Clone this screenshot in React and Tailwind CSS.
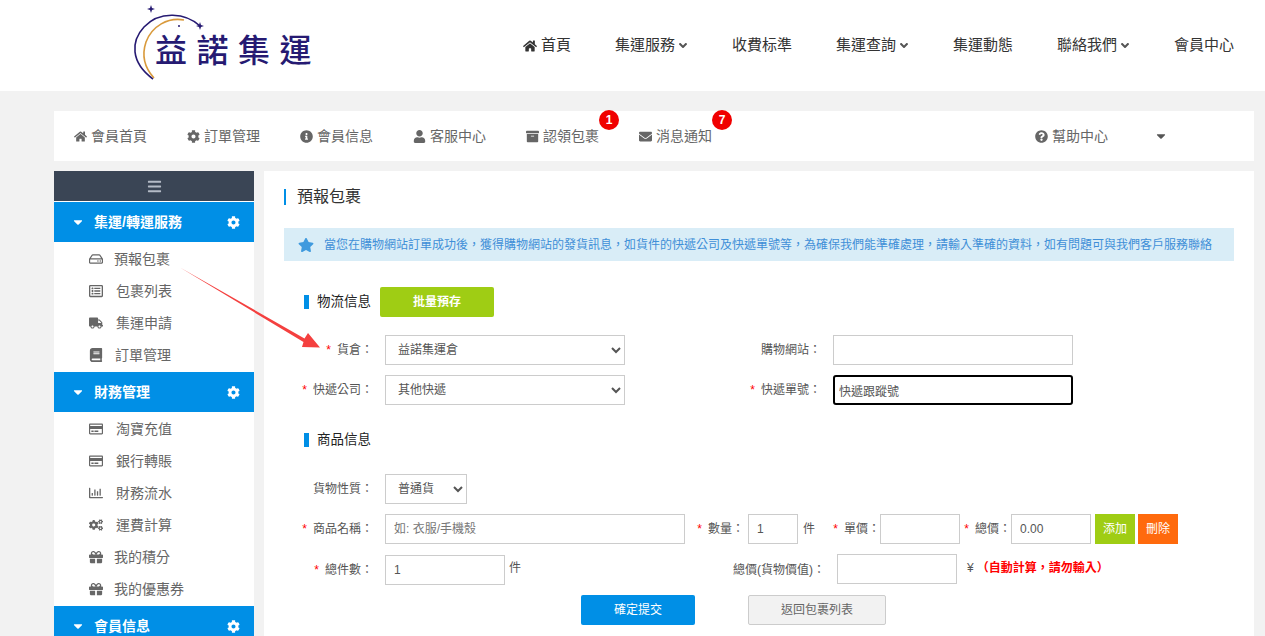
import {
  FaHome, FaCog, FaInfoCircle, FaUser, FaArchive, FaEnvelope, FaQuestionCircle, FaCaretDown,
  FaAngleDown, FaBars, FaStar, FaRegHdd, FaRegListAlt, FaTruck, FaBook, FaRegCreditCard,
  FaRegChartBar, FaCogs, FaGift,
} from 'react-icons/fa'

const FONT = 'font-["Liberation_Sans","Noto_Sans_CJK_TC",sans-serif]'

const topNav = [
  { label: '首頁', icon: true },
  { label: '集運服務', arrow: true },
  { label: '收費标準' },
  { label: '集運查詢', arrow: true },
  { label: '集運動態' },
  { label: '聯絡我們', arrow: true },
  { label: '會員中心' },
]

const memberNav = [
  { label: '會員首頁', Icon: FaHome },
  { label: '訂單管理', Icon: FaCog },
  { label: '會員信息', Icon: FaInfoCircle },
  { label: '客服中心', Icon: FaUser },
  { label: '認領包裹', Icon: FaArchive, badge: 1 },
  { label: '消息通知', Icon: FaEnvelope, badge: 7 },
]

const menu = [
  {
    title: '集運/轉運服務',
    items: [
      { label: '預報包裹', Icon: FaRegHdd, gap: 'ml-[11px]' },
      { label: '包裹列表', Icon: FaRegListAlt, gap: 'ml-[13px]' },
      { label: '集運申請', Icon: FaTruck, gap: 'ml-[13px]' },
      { label: '訂單管理', Icon: FaBook, gap: 'ml-[12px]' },
    ],
  },
  {
    title: '財務管理',
    items: [
      { label: '淘寶充值', Icon: FaRegCreditCard, gap: 'ml-[13px]' },
      { label: '銀行轉賬', Icon: FaRegCreditCard, gap: 'ml-[13px]' },
      { label: '財務流水', Icon: FaRegChartBar, gap: 'ml-[13px]' },
      { label: '運費計算', Icon: FaCogs, gap: 'ml-[13px]' },
      { label: '我的積分', Icon: FaGift, gap: 'ml-[11px]' },
      { label: '我的優惠券', Icon: FaGift, gap: 'ml-[11px]' },
    ],
  },
  { title: '會員信息', items: [] },
]

function Logo() {
  return (
    <div className="relative w-[190px] h-[91px] ml-[130px] pl-[25px] pt-[29px] shrink-0">
      <svg className="absolute left-0 top-0" width="190" height="91" viewBox="130 0 190 91">
        <path d="M200 26C186 13 160 10 144 27C131 41 130 62 153 79" fill="none" stroke="#261a72" strokeWidth="1.6" />
        <path d="M184 20C168 17 152 26 146 42C142 54 143 66 154 78" fill="none" stroke="#d99a3c" strokeWidth="1.6" />
        <path d="M151 5L152 8L155 9L152 10L151 13L150 10L147 9L150 8Z" fill="#261a72" />
        <path d="M200 22L201 25L204 26L201 27L200 30L199 27L196 26L199 25Z" fill="#261a72" />
        <circle cx="179" cy="26" r="1" fill="#261a72" />
      </svg>
      <div className="relative text-[32px] leading-[44px] tracking-[9.5px] font-medium whitespace-nowrap text-[#261a72]">
        益諾集運
      </div>
    </div>
  )
}

function Header() {
  return (
    <header className="h-[91px] bg-white flex items-center justify-between pr-[31px]">
      <Logo />
      <nav className="flex items-center gap-[44px] text-[15px] text-[#333]">
        {topNav.map((item) => (
          <a key={item.label} className="flex items-center whitespace-nowrap">
            {item.icon && <FaHome className="text-[14px] mr-[4px]" />}
            {item.label}
            {item.arrow && <FaAngleDown className="text-[13px] text-[#555] ml-[3px] w-[10px]" />}
          </a>
        ))}
      </nav>
    </header>
  )
}

function MemberBar() {
  return (
    <div className="h-[50px] bg-white flex items-center pl-[20px] text-[14px] text-[#666]">
      <div className="flex items-center gap-[40px]">
        {memberNav.map(({ label, Icon, badge }) => (
          <a key={label} className="relative flex items-center whitespace-nowrap gap-[4px]">
            <Icon className="text-[13px] text-[#666]" />
            {label}
            {badge && (
              <span className="absolute left-full top-[-16px] w-[20px] h-[20px] rounded-full bg-[#f00000] text-white text-[12px] font-bold flex items-center justify-center">
                {badge}
              </span>
            )}
          </a>
        ))}
      </div>
      <a className="ml-auto flex items-center gap-[4px] whitespace-nowrap">
        <FaQuestionCircle className="text-[13px]" />
        幫助中心
      </a>
      <FaCaretDown className="text-[14px] ml-[46px] mr-[86px] text-[#555]" />
    </div>
  )
}

function Sidebar() {
  return (
    <aside className="w-[200px] shrink-0 bg-white">
      <div className="h-[30px] bg-[#3a4555] flex items-center justify-center mb-px">
        <FaBars className="text-[15px] text-[#b4bbc6]" />
      </div>
      {menu.map((group) => (
        <div key={group.title}>
          <div className="h-[40px] bg-[#008fe6] flex items-center text-white font-bold text-[14px] pl-[18px] pr-[14px]">
            <FaCaretDown className="text-[14px] w-[12px]" />
            <span className="ml-[10px]">{group.title}</span>
            <FaCog className="ml-auto text-[13px]" />
          </div>
          {group.items.length > 0 && (
            <ul className="py-px">
              {group.items.map(({ label, Icon, gap }) => (
                <li key={label} className="h-[32px] flex items-center pl-[35px] text-[14px] text-[#666]">
                  <Icon className="text-[14px] w-[14px] shrink-0" />
                  <span className={gap}>{label}</span>
                </li>
              ))}
            </ul>
          )}
        </div>
      ))}
    </aside>
  )
}

function Star() {
  return <span className="text-[#f00] mr-[6px]">*</span>
}

function FieldLabel({ text, required, className = 'w-[101px] pr-[12px]' }) {
  return (
    <label className={`${className} shrink-0 text-right whitespace-nowrap text-[12px] text-[#555]`}>
      {required && <Star />}
      {text}：
    </label>
  )
}

const inputClass =
  'h-[30px] border border-[#ccc] bg-white px-[8px] text-[12px] text-[#555] outline-none placeholder:text-[#777]'

function SectionTitle({ children }) {
  return (
    <div className="flex items-center pl-[20px] text-[13.5px] text-[#222]">
      <span className="w-[5px] h-[14px] bg-[#008fe6] mr-[8px]" />
      {children}
    </div>
  )
}

function PackageForm() {
  return (
    <main className="flex-1 bg-white px-[20px] pt-[18px]">
      <h1 className="h-[16px] flex items-center border-l-2 border-[#008fe6] pl-[11px] text-[16px] font-normal text-[#333]">
        預報包裹
      </h1>

      <div className="mt-[23px] h-[33px] bg-[#d9edf7] flex items-center pl-[14px] text-[12px] text-[#3f8fd8] whitespace-nowrap">
        <FaStar className="text-[16px] text-[#3f9ade] mr-[10px] shrink-0" />
        當您在購物網站訂單成功後，獲得購物網站的發貨訊息，如貨件的快遞公司及快遞單號等，為確保我們能準確處理，請輸入準確的資料，如有問題可與我們客戶服務聯絡
      </div>

      <div className="mt-[26px] flex items-center">
        <SectionTitle>物流信息</SectionTitle>
        <button className="ml-[9px] w-[114px] h-[30px] rounded-[2px] bg-[#9fcd14] text-white text-[12px] font-bold">
          批量預存
        </button>
      </div>

      <div className="mt-[18px] flex items-center">
        <FieldLabel text="貨倉" required />
        <select className={`${inputClass} w-[240px]`} defaultValue="益諾集運倉">
          <option>益諾集運倉</option>
        </select>
        <FieldLabel text="購物網站" className="w-[208px] pr-[12px]" />
        <input className={`${inputClass} w-[240px]`} />
      </div>
      <div className="mt-[10px] flex items-center">
        <FieldLabel text="快遞公司" required />
        <select className={`${inputClass} w-[240px]`} defaultValue="其他快遞">
          <option>其他快遞</option>
        </select>
        <FieldLabel text="快遞單號" required className="w-[208px] pr-[12px]" />
        <input
          className="h-[30px] w-[240px] border-2 border-black rounded-[3px] bg-white px-[4px] text-[12px] text-[#555] outline-none"
          defaultValue="快遞跟蹤號"
        />
      </div>

      <div className="mt-[25px] h-[20px] flex items-center">
        <SectionTitle>商品信息</SectionTitle>
      </div>

      <div className="mt-[24px] flex items-center">
        <FieldLabel text="貨物性質" />
        <select className={`${inputClass} w-[82px]`} defaultValue="普通貨">
          <option>普通貨</option>
        </select>
      </div>

      <div className="mt-[10px] flex items-center">
        <FieldLabel text="商品名稱" required />
        <input className={`${inputClass} w-[300px]`} placeholder="如: 衣服/手機殼" />
        <FieldLabel text="數量" required className="w-[63px] pr-[4px]" />
        <input className={`${inputClass} w-[50px]`} defaultValue="1" />
        <span className="ml-[5px] w-[12px] text-[12px] text-[#555]">件</span>
        <FieldLabel text="單價" required className="w-[65px]" />
        <input className={`${inputClass} w-[80px]`} />
        <FieldLabel text="總價" required className="w-[51px]" />
        <input className={`${inputClass} w-[80px]`} defaultValue="0.00" />
        <button className="ml-[4px] w-[40px] h-[30px] bg-[#9fcd14] text-white text-[12px]">添加</button>
        <button className="ml-[3px] w-[40px] h-[30px] bg-[#ff6a0d] text-white text-[12px]">刪除</button>
      </div>

      <div className="mt-[11px] flex items-start">
        <FieldLabel text="總件數" required className="w-[101px] pr-[12px] leading-[30px]" />
        <input className={`${inputClass} w-[120px]`} defaultValue="1" />
        <span className="ml-[4px] w-[12px] text-[12px] leading-[26px] text-[#555]">件</span>
        <FieldLabel text="總價(貨物價值)" className="w-[316px] pr-[12px] leading-[30px]" />
        <input className={`${inputClass} w-[120px] -mt-px`} />
        <span className="ml-[10px] text-[12px] leading-[26px] text-[#555]">¥</span>
        <span className="ml-[3px] text-[12px] leading-[26px] font-bold text-[#f00]">（自動計算，請勿輸入）</span>
      </div>

      <div className="mt-[10px] flex pl-[297px]">
        <button className="w-[114px] h-[30px] rounded-[2px] bg-[#008fe6] text-white text-[12px]">確定提交</button>
        <button className="ml-[53px] w-[138px] h-[30px] rounded-[2px] bg-[#f2f2f2] border border-[#ccc] text-[#666] text-[12px]">
          返回包裹列表
        </button>
      </div>
    </main>
  )
}

export default function App() {
  return (
    <div className={`relative h-[636px] overflow-hidden bg-[#f2f2f2] ${FONT}`}>
      <Header />
      <div className="px-[54px] pr-[11px] pt-[20px]">
        <MemberBar />
        <div className="mt-[10px] flex gap-[10px] h-[600px]">
          <Sidebar />
          <PackageForm />
        </div>
      </div>
      {/* annotation arrow drawn over the page */}
      <svg className="absolute left-0 top-0 pointer-events-none" width="1265" height="636">
        <polygon points="180,267.5 304.5,338.5 308,333 320,347.5 302,347 303.5,342" fill="#f4403f" />
      </svg>
    </div>
  )
}
